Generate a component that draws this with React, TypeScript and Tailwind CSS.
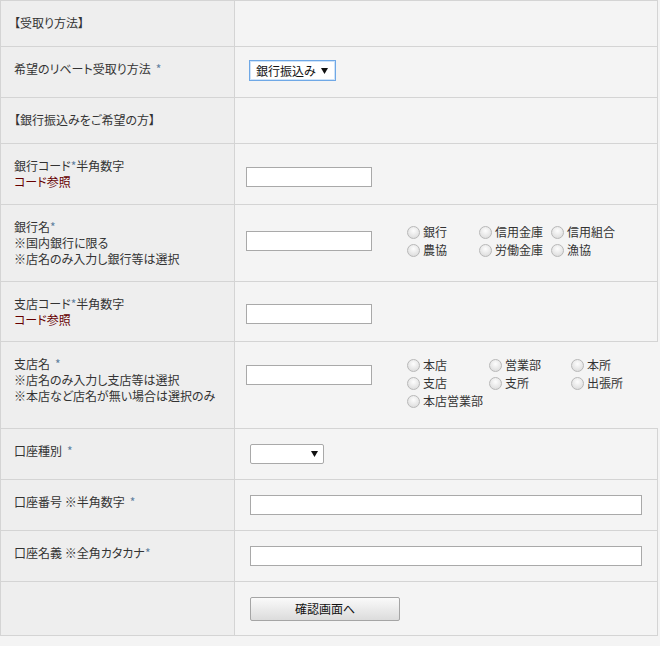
import React from 'react';

const Req = ({ space = false }: { space?: boolean }) => (
    <span className={`text-[#5f7f9f] leading-none ${space ? 'ml-[5px]' : ''}`}>*</span>
);

const Arrow = () => (
    <svg width="7" height="6" viewBox="0 0 7 6" className="shrink-0">
        <path d="M0 0 H7 L3.5 6 Z" fill="#111" />
    </svg>
);

const Radio = ({ label, width }: { label: string; width: string }) => (
    <div className={`flex items-center ${width}`}>
        <span className="w-[13px] h-[13px] rounded-full border border-[#b8b8b8] bg-[radial-gradient(circle_at_50%_35%,#fdfdfd,#d6d6d6)] mr-[3px] shrink-0" />
        <span>{label}</span>
    </div>
);

const TextBox = ({ className = '' }: { className?: string }) => (
    <div className={`h-[20px] bg-white border border-[#a9a9a9] shrink-0 ${className}`} />
);

interface RowProps {
    h: string;
    left?: React.ReactNode;
    right?: React.ReactNode;
    last?: boolean;
}

function Row({ h, left, right, last }: RowProps) {
    return (
        <div className={`flex ${h} ${last ? '' : 'border-b border-[#d4d4d4]'}`}>
            <div className="w-[234px] shrink-0 bg-[#eeeeee] border-r border-[#d4d4d4] pl-[13px] pt-[14px] leading-[16px]">
                {left}
            </div>
            <div className="flex-1 bg-[#f4f4f4] relative">{right}</div>
        </div>
    );
}

export default function App() {
    return (
        <div className="min-h-[646px] bg-[#f4f4f4] text-[12px] text-[#333] [font-family:'Noto_Sans_CJK_JP','Noto_Sans',sans-serif] [font-feature-settings:'palt']">
            <div className="w-[658px] border border-[#d4d4d4]">
                <Row h="h-[46px]" left={<div>【受取り方法】</div>} />

                <Row
                    h="h-[51px]"
                    left={<div>希望のリベート受取り方法<Req space /></div>}
                    right={
                        <div className="pt-[13px] pl-[14px]">
                            <div className="w-[87px] h-[21px] bg-white border border-[#6fa8e6] shadow-[inset_0_0_0_1px_#cfe3f8] flex items-center justify-between pl-[6px] pr-[7px] text-[#111]">
                                <span>銀行振込み</span>
                                <Arrow />
                            </div>
                        </div>
                    }
                />

                <Row h="h-[46px]" left={<div>【銀行振込みをご希望の方】</div>} />

                <Row
                    h="h-[61px]"
                    left={
                        <>
                            <div>銀行コード<Req />半角数字</div>
                            <div className="text-[#660000]">コード参照</div>
                        </>
                    }
                    right={
                        <div className="pt-[23px] pl-[11px]">
                            <TextBox className="w-[126px]" />
                        </div>
                    }
                />

                <Row
                    h="h-[77px]"
                    left={
                        <>
                            <div>銀行名<Req /></div>
                            <div>※国内銀行に限る</div>
                            <div>※店名のみ入力し銀行等は選択</div>
                        </>
                    }
                    right={
                        <div className="flex items-start pl-[11px] pt-[18px]">
                            <TextBox className="w-[126px] mt-[8px]" />
                            <div className="ml-[35px] grid grid-cols-[72px_72px_90px] leading-[18px]">
                                <Radio label="銀行" width="" />
                                <Radio label="信用金庫" width="" />
                                <Radio label="信用組合" width="" />
                                <Radio label="農協" width="" />
                                <Radio label="労働金庫" width="" />
                                <Radio label="漁協" width="" />
                            </div>
                        </div>
                    }
                />

                <Row
                    h="h-[60px]"
                    left={
                        <>
                            <div>支店コード<Req />半角数字</div>
                            <div className="text-[#660000]">コード参照</div>
                        </>
                    }
                    right={
                        <div className="pt-[22px] pl-[11px]">
                            <TextBox className="w-[126px]" />
                        </div>
                    }
                />

                <Row
                    h="h-[87px]"
                    left={
                        <>
                            <div>支店名<Req space /></div>
                            <div>※店名のみ入力し支店等は選択</div>
                            <div>※本店など店名が無い場合は選択のみ</div>
                        </>
                    }
                    right={
                        <div className="flex items-start pl-[11px] pt-[14px]">
                            <TextBox className="w-[126px] mt-[9px]" />
                            <div className="ml-[35px] grid grid-cols-[82px_82px_90px] leading-[18px]">
                                <Radio label="本店" width="" />
                                <Radio label="営業部" width="" />
                                <Radio label="本所" width="" />
                                <Radio label="支店" width="" />
                                <Radio label="支所" width="" />
                                <Radio label="出張所" width="" />
                                <Radio label="本店営業部" width="col-span-3" />
                            </div>
                        </div>
                    }
                />

                <Row
                    h="h-[51px]"
                    left={<div>口座種別<Req space /></div>}
                    right={
                        <div className="pt-[15px] pl-[15px]">
                            <div className="w-[74px] h-[20px] bg-white border border-[#a9a9a9] rounded-[2px] flex items-center justify-end pr-[5px]">
                                <Arrow />
                            </div>
                        </div>
                    }
                />

                <Row
                    h="h-[51px]"
                    left={<div>口座番号 ※半角数字<Req space /></div>}
                    right={
                        <div className="pt-[15px] pl-[15px]">
                            <TextBox className="w-[392px]" />
                        </div>
                    }
                />

                <Row
                    h="h-[51px]"
                    left={<div>口座名義 ※全角カタカナ<Req /></div>}
                    right={
                        <div className="pt-[15px] pl-[15px]">
                            <TextBox className="w-[392px]" />
                        </div>
                    }
                />

                <Row
                    h="h-[53px]"
                    last
                    right={
                        <div className="pt-[15px] pl-[15px]">
                            <button className="w-[150px] h-[24px] border border-[#a5a5a5] rounded-[2px] bg-gradient-to-b from-[#fafafa] to-[#dcdcdc] text-[12px] text-[#111] leading-none">
                                確認画面へ
                            </button>
                        </div>
                    }
                />
            </div>
        </div>
    );
}
